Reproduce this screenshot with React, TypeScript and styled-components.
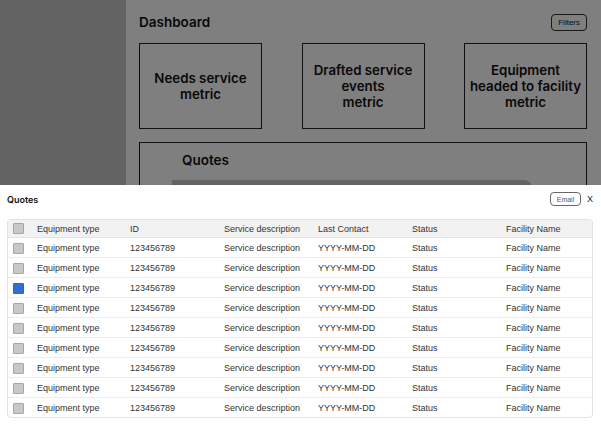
import React from "react";
import styled, { createGlobalStyle } from "styled-components";

const rows = Array.from({ length: 9 }, (_, i) => ({
  id: i,
  type: "Equipment type",
  num: "123456789",
  desc: "Service description",
  contact: "YYYY-MM-DD",
  status: "Status",
  facility: "Facility Name",
  checked: i === 2,
}));

const App: React.FC = () => {
  return (
    <>
      <GlobalStyle />
      <Page>
        <Sidebar />
        <Main>
          <TopBar>
            <Title>Dashboard</Title>
            <OutlineButton>Filters</OutlineButton>
          </TopBar>
          <Metrics>
            <MetricCard>
              Needs service
              <br />
              metric
            </MetricCard>
            <MetricCard>
              Drafted service
              <br />
              events
              <br />
              metric
            </MetricCard>
            <MetricCard>
              Equipment
              <br />
              headed to facility
              <br />
              metric
            </MetricCard>
          </Metrics>
          <QuotesCard>
            <QuotesTitle>Quotes</QuotesTitle>
            <QuotesBar />
          </QuotesCard>
        </Main>
      </Page>
      <Backdrop />
      <Sheet>
        <SheetHeader>
          <SheetTitle>Quotes</SheetTitle>
          <SheetActions>
            <SmallButton>Email</SmallButton>
            <CloseButton>X</CloseButton>
          </SheetActions>
        </SheetHeader>
        <Table>
          <HeaderRow>
            <Cell>
              <Checkbox />
            </Cell>
            <Cell>Equipment type</Cell>
            <Cell>ID</Cell>
            <Cell>Service description</Cell>
            <Cell>Last Contact</Cell>
            <Cell>Status</Cell>
            <Cell>Facility Name</Cell>
          </HeaderRow>
          {rows.map((r) => (
            <Row key={r.id}>
              <Cell>
                <Checkbox $checked={r.checked} />
              </Cell>
              <Cell>{r.type}</Cell>
              <Cell>{r.num}</Cell>
              <Cell>{r.desc}</Cell>
              <Cell>{r.contact}</Cell>
              <Cell>{r.status}</Cell>
              <Cell>{r.facility}</Cell>
            </Row>
          ))}
        </Table>
      </Sheet>
    </>
  );
};

const GlobalStyle = createGlobalStyle`
  * { box-sizing: border-box; }
  body {
    margin: 0;
    font-family: Inter, "Noto Sans", sans-serif;
    color: #111;
    background: #fff;
  }
`;

const Page = styled.div`
  display: flex;
  height: 100vh;
  overflow: hidden;
`;

const Sidebar = styled.div`
  width: 126px;
  flex-shrink: 0;
  background: #c6c6c6;
`;

const Main = styled.div`
  flex: 1;
  padding: 12px 14px 0 13px;
  display: flex;
  flex-direction: column;
`;

const TopBar = styled.div`
  display: flex;
  justify-content: space-between;
  align-items: center;
  height: 18px;
`;

const Title = styled.h1`
  margin: 2px 0 0;
  font-size: 13.5px;
  font-weight: 600;
`;

const OutlineButton = styled.button`
  height: 17px;
  padding: 0 6px;
  border: 1px solid #333;
  border-radius: 4px;
  background: transparent;
  font-family: "Liberation Sans", Arial, sans-serif;
  font-size: 8px;
  color: #222;
  margin-top: 2px;
`;

const Metrics = styled.div`
  display: flex;
  justify-content: space-between;
  margin-top: 13px;
`;

const MetricCard = styled.div`
  width: 123px;
  height: 86px;
  border: 1px solid #222;
  display: flex;
  align-items: center;
  justify-content: center;
  text-align: center;
  font-size: 13.3px;
  font-weight: 600;
  line-height: 16px;
`;

const QuotesCard = styled.div`
  margin-top: 13px;
  height: 120px;
  border: 1px solid #222;
  padding: 9px 0 0 32px;
`;

const QuotesTitle = styled.h2`
  margin: 0 0 0 10px;
  font-size: 13.5px;
  font-weight: 600;
  line-height: 16px;
`;

const QuotesBar = styled.div`
  margin-top: 12px;
  width: 360px;
  height: 40px;
  background: #c8c8c8;
  border-top-right-radius: 8px;
`;

const Backdrop = styled.div`
  position: fixed;
  inset: 0;
  background: rgba(0, 0, 0, 0.5);
`;

const Sheet = styled.div`
  position: fixed;
  left: 0;
  right: 0;
  bottom: 0;
  height: 242px;
  background: #fff;
  padding: 7px 8px 0 7px;
`;

const SheetHeader = styled.div`
  display: flex;
  justify-content: space-between;
  align-items: center;
  height: 14px;
`;

const SheetTitle = styled.h3`
  margin: 0;
  font-size: 9px;
  font-weight: 600;
`;

const SheetActions = styled.div`
  display: flex;
  align-items: center;
  gap: 6px;
`;

const SmallButton = styled.button`
  height: 14px;
  width: 31px;
  padding: 0;
  border: 1px solid #666;
  border-radius: 4px;
  background: #fff;
  font-family: "Liberation Sans", Arial, sans-serif;
  font-size: 7px;
  color: #555;
`;

const CloseButton = styled.button`
  border: none;
  background: none;
  padding: 0;
  font-family: "Liberation Sans", Arial, sans-serif;
  font-size: 9px;
  color: #222;
`;

const Table = styled.div`
  margin-top: 13px;
  border: 1px solid #e2e2e2;
  border-radius: 4px;
  overflow: hidden;
`;

const Row = styled.div`
  display: grid;
  grid-template-columns: 29px 93px 94px 94px 94px 94px 1fr;
  height: 20px;
  padding-top: 1px;
  align-items: center;
  border-bottom: 1px solid #ececec;
  font-family: "Liberation Sans", Arial, sans-serif;
  font-size: 9px;
  color: #333;

  &:last-child {
    border-bottom: none;
    height: 19px;
  }
`;

const HeaderRow = styled(Row)`
  height: 18px;
  padding-top: 0;
  background: #f2f2f2;
  border-bottom: 1px solid #e2e2e2;
`;

const Cell = styled.div`
  display: flex;
  align-items: center;
  white-space: nowrap;

  &:first-child {
    padding-left: 5px;
  }
`;

const Checkbox = styled.span<{ $checked?: boolean }>`
  display: inline-block;
  width: 11px;
  height: 11px;
  border-radius: 1px;
  background: ${(p) => (p.$checked ? "#2f6fd6" : "#c8c8c8")};
  border: 1px solid ${(p) => (p.$checked ? "#2a63c0" : "#a6a6a6")};
`;

export default App;
